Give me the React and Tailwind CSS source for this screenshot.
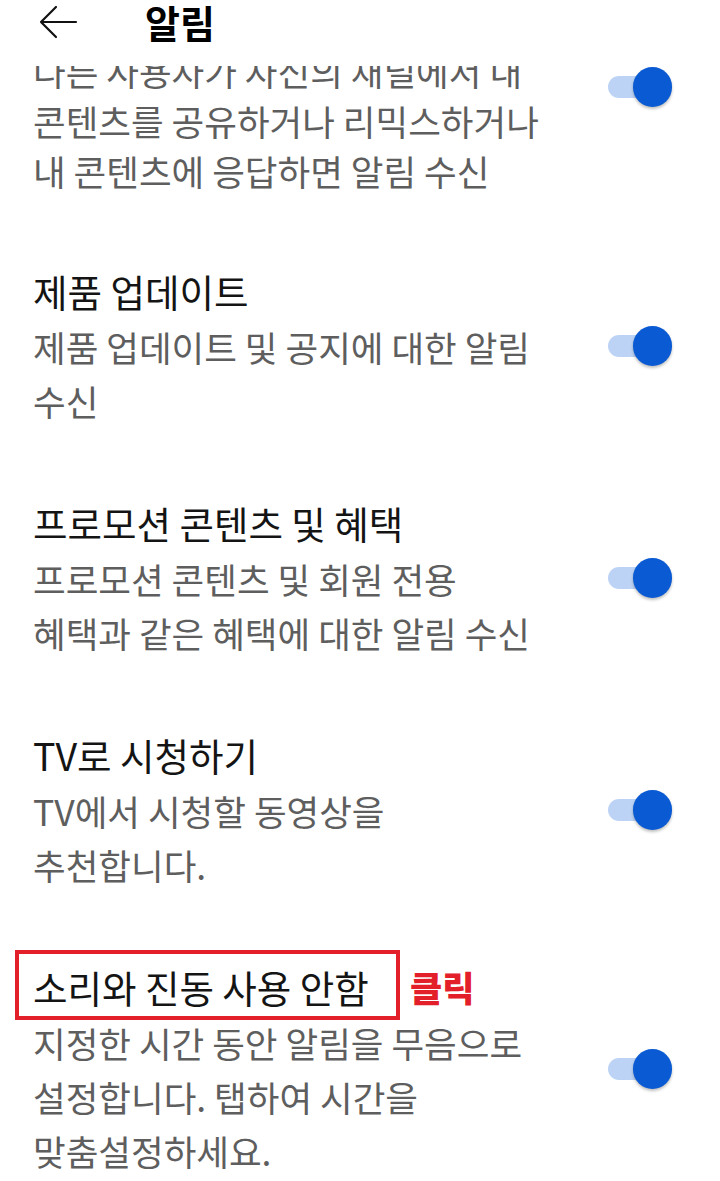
import React from "react";

const items = [
  {
    title: "댓글 및 공유",
    lines: ["다른 사용자가 자신의 채널에서 내", "콘텐츠를 공유하거나 리믹스하거나", "내 콘텐츠에 응답하면 알림 수신"],
    tight: true,
  },
  {
    title: "제품 업데이트",
    lines: ["제품 업데이트 및 공지에 대한 알림", "수신"],
  },
  {
    title: "프로모션 콘텐츠 및 혜택",
    lines: ["프로모션 콘텐츠 및 회원 전용", "혜택과 같은 혜택에 대한 알림 수신"],
  },
  {
    title: "TV로 시청하기",
    lines: ["TV에서 시청할 동영상을", "추천합니다."],
  },
  {
    title: "소리와 진동 사용 안함",
    lines: ["지정한 시간 동안 알림을 무음으로", "설정합니다. 탭하여 시간을", "맞춤설정하세요."],
    marked: true,
  },
];

function Toggle({ raised }) {
  return (
    <div className={`relative w-[64px] h-[40px] shrink-0 ${raised ? "mb-[12px]" : ""}`}>
      <div className="absolute left-0 top-[9px] w-[52px] h-[22px] rounded-full bg-[#bcd3f5]" />
      <div className="absolute right-0 top-0 w-[39px] h-[40px] rounded-full bg-[#0a5bd3] shadow-[0_2px_3px_rgba(0,0,0,0.25)]" />
    </div>
  );
}

function Item({ title, lines, tight, marked }) {
  return (
    <div className="flex items-center pl-[33px] pr-[48px] pt-[34px] pb-[34px]">
      <div className="flex-1">
        <div className="relative inline-block text-[37.5px] leading-[54px] font-normal text-[#141414] mb-[2px] whitespace-nowrap">
          {title}
          {marked && (
            <>
              <div className="absolute left-[-18px] top-[-10px] w-[385px] h-[70px] border-[4px] border-[#e3202a]" />
              <span className="absolute left-[377px] top-0 text-[35px] font-black text-[#e3202a]">클릭</span>
            </>
          )}
        </div>
        {lines.map((l) => (
          <div
            key={l}
            className={`text-[35.5px] text-[#5e5e5e] whitespace-nowrap ${tight ? "leading-[50px]" : "leading-[54px]"}`}
          >
            {l}
          </div>
        ))}
      </div>
      <Toggle raised={tight} />
    </div>
  );
}

export default function App() {
  return (
    <div
      className="w-[720px] h-[1181px] overflow-hidden bg-white flex flex-col"
      style={{ fontFamily: '"Noto Sans CJK KR", "Noto Sans", sans-serif' }}
    >
      <header className="relative z-10 h-[66px] shrink-0 bg-white">
        <div className="flex items-center h-[44px]">
          <svg className="ml-[38px]" width="40" height="36" viewBox="0 0 40 36" fill="none" stroke="#111" strokeWidth="2.2" strokeLinecap="round" strokeLinejoin="round">
            <path d="M38 18H3M18 3L3 18l15 15" />
          </svg>
          <h1 className="ml-[67px] text-[38px] font-bold text-black leading-none">알림</h1>
        </div>
      </header>
      <div className="-mt-[110px]">
        {items.map((it) => (
          <Item key={it.title} {...it} />
        ))}
      </div>
    </div>
  );
}
